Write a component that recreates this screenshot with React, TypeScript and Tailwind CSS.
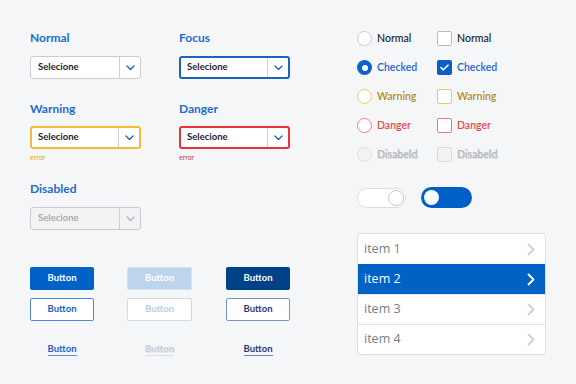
import React from "react";

type SelState = "normal" | "focus" | "warning" | "danger" | "disabled";

const Chevron = ({ color }: { color: string }) => (
  <svg width="9" height="6" viewBox="0 0 9 6" fill="none">
    <path d="M1 1l3.5 3.5L8 1" stroke={color} strokeWidth="1.4" strokeLinecap="round" strokeLinejoin="round" />
  </svg>
);

function Select({ state }: { state: SelState }) {
  const border =
    state === "focus"
      ? "border-[#1c63c0] border-2"
      : state === "warning"
      ? "border-[#f6bb34] border-2"
      : state === "danger"
      ? "border-[#e5333b] border-2"
      : "border-[#c9ccd3] border";
  const bg = state === "disabled" ? "bg-[#f3f3f4]" : "bg-white";
  const txt = state === "disabled" ? "text-[#a9abb0]" : "text-[#1f2430]";
  const inner = state === "focus" || state === "warning" || state === "danger";
  return (
    <div className={`flex h-[23px] w-[111px] items-stretch rounded-[3px] ${border} ${bg}`}>
      <div className={`flex flex-1 items-center text-[9.5px] font-bold ${txt} ${inner ? "pl-[6px]" : "pl-[7px]"}`}>
        Selecione
      </div>
      <div className="w-px bg-[#cdd0d6]" />
      <div className="flex w-[20px] items-center justify-center">
        <Chevron color={state === "disabled" ? "#9fb6e0" : "#2260c4"} />
      </div>
    </div>
  );
}

const H = ({ children }: { children: React.ReactNode }) => (
  <div className="h-[16px] text-[12px] font-bold leading-[16px] text-[#1e6ccf]">{children}</div>
);

function Radio({ kind }: { kind: string }) {
  const map: Record<string, string> = {
    normal: "border-[#c8cbd0] bg-white",
    warning: "border-[#f3cd5a] bg-white",
    danger: "border-[#e98282] bg-white",
    disabled: "border-[#dcdde0] bg-[#f3f3f4]",
  };
  if (kind === "checked")
    return (
      <div className="flex h-[15px] w-[15px] items-center justify-center rounded-full bg-[#0b62c8]">
        <div className="h-[6px] w-[6px] rounded-full bg-white" />
      </div>
    );
  return <div className={`h-[15px] w-[15px] rounded-full border ${map[kind]}`} />;
}

function Check({ kind }: { kind: string }) {
  const map: Record<string, string> = {
    normal: "border-[#b8bbc1] bg-white",
    warning: "border-[#ebc66a] bg-white",
    danger: "border-[#e77b7b] bg-white",
    disabled: "border-[#d9dadd] bg-[#f3f3f4]",
  };
  if (kind === "checked")
    return (
      <div className="flex h-[15px] w-[15px] items-center justify-center rounded-[2px] bg-[#0b5fc4]">
        <svg width="9" height="7" viewBox="0 0 9 7" fill="none">
          <path d="M1 3.6l2.3 2.2L8 1.2" stroke="white" strokeWidth="1.6" strokeLinecap="round" strokeLinejoin="round" />
        </svg>
      </div>
    );
  return <div className={`h-[15px] w-[15px] rounded-[2px] border ${map[kind]}`} />;
}

const labelCls: Record<string, string> = {
  normal: "text-[#2b2f3a]",
  checked: "text-[#1c6ad0]",
  warning: "text-[#b48a14]",
  danger: "text-[#de4b4b]",
  disabled: "text-[#b4b6bb] [text-shadow:1px_1px_0_#dedfe2]",
};
const labelTxt: Record<string, string> = {
  normal: "Normal",
  checked: "Checked",
  warning: "Warning",
  danger: "Danger",
  disabled: "Disabeld",
};

const ListChevron = ({ color }: { color: string }) => (
  <svg width="8" height="13" viewBox="0 0 8 13" fill="none">
    <path d="M1.5 1.5l5 5-5 5" stroke={color} strokeWidth="1.8" strokeLinecap="round" strokeLinejoin="round" />
  </svg>
);

export default function App() {
  const kinds = ["normal", "checked", "warning", "danger", "disabled"];
  return (
    <div className="flex h-[384px] w-[576px] bg-[#f5f6f8] font-['Lato',sans-serif]">
      {/* Left */}
      <div className="ml-[30px] mt-[30px] flex w-[270px] flex-col">
        <div className="grid grid-cols-[149px_111px]">
          <div className="flex flex-col">
            <H>Normal</H>
            <div className="mt-[10px]"><Select state="normal" /></div>
          </div>
          <div className="flex flex-col">
            <H>Focus</H>
            <div className="mt-[10px]"><Select state="focus" /></div>
          </div>
        </div>
        <div className="mt-[22px] grid grid-cols-[149px_111px]">
          <div className="flex flex-col">
            <H>Warning</H>
            <div className="mt-[9px]"><Select state="warning" /></div>
            <div className="mt-[4px] text-[7px] leading-[9px] text-[#e0a72b]">error</div>
          </div>
          <div className="flex flex-col">
            <H>Danger</H>
            <div className="mt-[9px]"><Select state="danger" /></div>
            <div className="mt-[4px] text-[7px] leading-[9px] text-[#d23a3a]">error</div>
          </div>
        </div>
        <div className="mt-[19px] flex flex-col">
          <H>Disabled</H>
          <div className="mt-[10px]"><Select state="disabled" /></div>
        </div>

        <div className="mt-[37px] grid grid-cols-[97px_99px_64px] gap-y-[8px] text-[9.5px] font-bold">
          <div className="flex h-[23px] w-[64px] items-center justify-center rounded-[2px] bg-[#0061c6] text-white">Button</div>
          <div className="flex h-[23px] w-[65px] items-center justify-center rounded-[2px] border border-[#d4e2f2] bg-[#bcd4ee] text-white">Button</div>
          <div className="flex h-[23px] w-[64px] items-center justify-center rounded-[2px] bg-[#00428a] text-white">Button</div>

          <div className="flex h-[23px] w-[64px] items-center justify-center rounded-[2px] border border-[#4d8ad8] bg-white text-[#1a5cbc]">Button</div>
          <div className="flex h-[23px] w-[65px] items-center justify-center rounded-[2px] border border-[#d2d9e2] bg-white text-[#b6cde8]">Button</div>
          <div className="flex h-[23px] w-[64px] items-center justify-center rounded-[2px] border border-[#7a94c4] bg-white text-[#1d3b7c]">Button</div>

          <div className="mt-[14px] flex w-[64px] justify-center">
            <span className="border-b border-[#5b8fe8] leading-[12px] text-[#1d5fc8]">Button</span>
          </div>
          <div className="mt-[14px] flex w-[65px] justify-center">
            <span className="border-b border-[#d8dde6] leading-[12px] text-[#c9ced8] [text-shadow:1px_1px_0_#e3e6ea]">Button</span>
          </div>
          <div className="mt-[14px] flex w-[64px] justify-center">
            <span className="border-b border-[#6b7fb0] leading-[12px] text-[#1f3a78]">Button</span>
          </div>
        </div>
      </div>

      {/* Right */}
      <div className="ml-[57px] mt-[31px] flex w-[189px] flex-col">
        <div className="grid grid-cols-[80px_100px] gap-y-[14px]">
          {kinds.map((k) => (
            <React.Fragment key={k}>
              <div className="flex h-[15px] items-center gap-[5px]">
                <Radio kind={k} />
                <span className={`text-[10.5px] font-semibold ${labelCls[k]}`}>{labelTxt[k]}</span>
              </div>
              <div className="flex h-[15px] items-center gap-[5px]">
                <Check kind={k} />
                <span className={`text-[10.5px] font-semibold ${labelCls[k]}`}>{labelTxt[k]}</span>
              </div>
            </React.Fragment>
          ))}
        </div>

        <div className="mt-[25px] flex items-center gap-[15px]">
          <div className="flex h-[20px] w-[49px] items-center justify-end rounded-full border border-[#dcdee2] bg-white pr-[1px]">
            <div className="h-[16px] w-[16px] rounded-full border border-[#c8cbd0] bg-white" />
          </div>
          <div className="flex h-[21px] w-[51px] items-center rounded-full bg-[#0060c8] pl-[3px]">
            <div className="h-[15px] w-[15px] rounded-full bg-white" />
          </div>
        </div>

        <div className="mt-[25px] flex w-[189px] flex-col overflow-hidden rounded-[4px] border border-[#dcdfe3] bg-white font-['Open_Sans',sans-serif]">
          {["item 1", "item 2", "item 3", "item 4"].map((t, i) => (
            <div
              key={t}
              className={`flex h-[30px] items-center justify-between pl-[6px] pr-[10px] text-[12.5px] ${
                i === 1 ? "bg-[#0062c4] text-white" : "text-[#7a7d84]"
              } ${i > 1 ? "border-t border-[#e2e4e8]" : ""} ${i === 3 ? "h-[29px]" : ""}`}
            >
              <span>{t}</span>
              <ListChevron color={i === 1 ? "#ffffff" : "#cdd0d4"} />
            </div>
          ))}
        </div>
      </div>
    </div>
  );
}
